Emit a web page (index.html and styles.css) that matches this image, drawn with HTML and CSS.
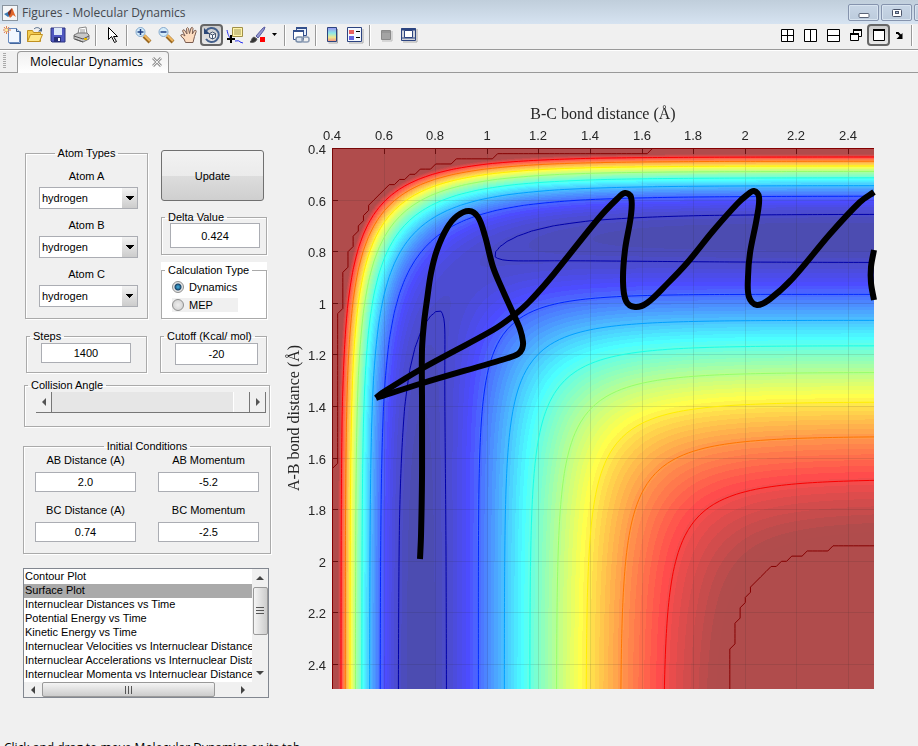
FILE: index.html
```html
<!DOCTYPE html>
<html lang="en">
<head>
<meta charset="UTF-8">
<meta name="viewport" content="width=device-width, initial-scale=1.0">
<title>Figures - Molecular Dynamics</title>
<link rel="stylesheet" href="styles.css">
</head>
<body>
<header class="titlebar">
    <svg class="app-icon" width="16" height="16" viewBox="0 0 16 16">
        <rect x="0.5" y="0.5" width="15" height="15" fill="#f4f6f8" stroke="#8a949e"/>
        <path d="M2 9l4-2 3 3-3 2z" fill="#3a78b0"/>
        <path d="M6 7l4-4 0 8-2 1-2-3z" fill="#7a2c20"/>
        <path d="M10 3c1 1 2 5 4 9l-3-2-3 3-1-2c2-1 2-5 3-8z" fill="#e0662c"/>
    </svg>
    <h1>Figures - Molecular Dynamics</h1>
    <div class="window-buttons">
        <button type="button" aria-label="Minimize"><svg width="12" height="12" viewBox="0 0 12 12"><rect x="1" y="6.500" width="10" height="4" rx="1" fill="#fff" stroke="#5a6478"/></svg></button>
        <button type="button" aria-label="Maximize"><svg width="12" height="12" viewBox="0 0 12 12"><rect x="1.500" y="2.500" width="9" height="7" rx="1" fill="#fff" stroke="#4a546a"/><rect x="4.500" y="4.500" width="3" height="2" fill="#a8bcd8" stroke="#4a546a"/></svg></button>
        <button type="button" aria-label="Close"></button>
    </div>
</header>

<nav class="toolbar">
    <button type="button" aria-label="New Figure"><svg width="18" height="18" viewBox="0 0 18 18"><path d="M5.500 2.500h8l3 3v11h-11z" fill="#f2f7ff" stroke="#6a8cc0"/><path d="M13.500 2.500v3h3" fill="#c8daf4" stroke="#34588c"/><path d="M17.500 5.500v12h-11" fill="none" stroke="#44669c"/><path d="M3.500 0v8M0 4h8M1 1l5 6M6 1L1 7" stroke="#e08050"/><circle cx="3.500" cy="4" r="1.500" fill="#fff2a0"/></svg></button>
    <button type="button" aria-label="Open File"><svg width="18" height="18" viewBox="0 0 18 18"><path d="M1.500 15.500v-11h5l1 2h7v9z" fill="#f4cc50" stroke="#c09020"/><path d="M1.500 15.500l3-7h12l-3 7z" fill="#ffe88a" stroke="#c09020"/><path d="M8 3c2-2 5-2 7 1" fill="none" stroke="#4a6484"/><path d="M16 1.500v4h-4z" fill="#4a6484"/></svg></button>
    <button type="button" aria-label="Save Figure"><svg width="18" height="18" viewBox="0 0 18 18"><path d="M2 2h14v14H3l-1-1z" fill="#5058c0" stroke="#2c3480"/><path d="M5 2h8v7H5z" fill="#dce8f8"/><path d="M5 11h7v5H5z" fill="#283078"/><path d="M9 12h2v3H9z" fill="#fff"/></svg></button>
    <button type="button" aria-label="Print Figure"><svg width="18" height="18" viewBox="0 0 18 18"><path d="M6 8l1-6 7-1 1 7z" fill="#fff" stroke="#888"/><path d="M8 4h5M8 6h5" stroke="#999"/><path d="M2 9l4-2h9l2 2v4l-6 3-9-3z" fill="#c8c8c8" stroke="#777"/><path d="M2 10l9 3 6-3M3 13l8 3" stroke="#555" fill="none"/><path d="M12 13h3" stroke="#e8b800" stroke-width="2"/></svg></button>
    <span class="sep"></span>
    <button type="button" aria-label="Edit Plot"><svg width="18" height="18" viewBox="0 0 18 18"><path d="M5.500 1.500v12l3-3 3 6 2-1-3-5h4z" fill="#fff" stroke="#000"/></svg></button>
    <span class="sep"></span>
    <button type="button" aria-label="Zoom In"><svg width="18" height="18" viewBox="0 0 18 18"><path d="M10 10l6 6" stroke="#9a6820" stroke-width="4"/><path d="M10 9l6 6" stroke="#f0b860" stroke-width="2"/><circle cx="6.500" cy="6" r="4.500" fill="#d4ecfa" stroke="#84a8cc"/><path d="M6.500 3v6M3.500 6h6" stroke="#1c3c80" stroke-width="1.500"/></svg></button>
    <button type="button" aria-label="Zoom Out"><svg width="18" height="18" viewBox="0 0 18 18"><path d="M10 10l6 6" stroke="#9a6820" stroke-width="4"/><path d="M10 9l6 6" stroke="#f0b860" stroke-width="2"/><circle cx="6.500" cy="6" r="4.500" fill="#d4ecfa" stroke="#84a8cc"/><path d="M3.500 6h6" stroke="#1c3c80" stroke-width="1.500"/></svg></button>
    <button type="button" aria-label="Pan"><svg width="18" height="18" viewBox="0 0 18 18"><path d="M5.500 16.500L4 13 .8 10q0-2 2-1.500L5 10 2.600 5q.4-2 1.800-1L7 8 6.500 2.500q1-1.800 2 0L9.500 7.500 11 2q1.500-1.500 2 .5l-.7 5.500L14.500 4.500q1.800-.8 1.700 1l-1.700 5-1.500 6z" fill="#fcdcc0" stroke="#7a5c50"/></svg></button>
    <button type="button" class="pressed" aria-label="Rotate 3D"><svg width="18" height="18" viewBox="0 0 18 18"><path d="M3 5A7 7 0 1 1 3 13" fill="none" stroke="#44608c" stroke-width="2"/><path d="M1 2v6h6z" fill="#2c4878"/><path d="M6.500 7.500l3-1.500 3 1.500v4l-3 1.500-3-1.500zM6.500 7.500l3 1.500 3-1.500M9.500 9v4" fill="#f4f6fa" stroke="#44546c"/></svg></button>
    <button type="button" aria-label="Data Cursor"><svg width="18" height="18" viewBox="0 0 18 18"><path d="M6.500 1.500h10v9h-10z" fill="#fff4a8" stroke="#a09048"/><path d="M8 4h7M8 6h7M8 8h7" stroke="#a09860"/><path d="M1 4c1 5 2 7 4 9M9 15c3 0 4-1 5 1l3 1" fill="none" stroke="#2830f0"/><path d="M5 9v8M1 13h8" stroke="#000" stroke-width="2"/></svg></button>
    <button type="button" aria-label="Brush"><svg width="18" height="18" viewBox="0 0 18 18"><path d="M7 10l7-8 2-1-1 3-6 8z" fill="#9498d0" stroke="#585ca0"/><path d="M1 16c2-1 1-4 4-5l3 2c-1 3-4 4-7 3z" fill="#333" stroke="#555"/><path d="M11 11h5v5h-5z" fill="#f00"/></svg></button>
    <button type="button" class="caret" aria-label="Brush options"><svg width="6" height="4" viewBox="0 0 6 4"><path d="M0 0h5L2.500 3z" fill="#000"/></svg></button>
    <span class="sep"></span>
    <button type="button" aria-label="Link Plot"><svg width="18" height="18" viewBox="0 0 18 18"><path d="M4.500 2.500h10v7h-10z" fill="#e8f0fc" stroke="#34508c"/><path d="M1.500 5.500h10v8h-10z" fill="#fff" stroke="#34508c"/><path d="M4 2h11M1 5h11" stroke="#34508c" stroke-width="2"/><rect x="4" y="11" width="7" height="5" rx="2" fill="#dce4ee" stroke="#788ca8" stroke-width="1.500"/><rect x="10" y="11" width="7" height="5" rx="2" fill="none" stroke="#8c9cb4" stroke-width="1.500"/></svg></button>
    <span class="sep"></span>
    <button type="button" aria-label="Insert Colorbar"><svg width="18" height="18" viewBox="0 0 18 18"><defs><linearGradient id="bar" x2="0" y2="1"><stop offset="0" stop-color="#9a90f0"/><stop offset=".4" stop-color="#8ce8e8"/><stop offset=".7" stop-color="#f0e890"/><stop offset="1" stop-color="#f49080"/></linearGradient></defs><path d="M14.500 3v14h-9" stroke="#aaa" fill="none"/><path d="M4.500 1.500h9v14h-9z" fill="url(#bar)" stroke="#2c4480"/></svg></button>
    <button type="button" aria-label="Insert Legend"><svg width="18" height="18" viewBox="0 0 18 18"><path d="M17 3v14H3" stroke="#aaa" fill="none"/><path d="M1.500 1.500h14v14h-14z" fill="#f4f8ff" stroke="#2c4480"/><path d="M3 4h5v4H3z" fill="#e86060"/><path d="M3 10h5v4H3z" fill="#6464e0"/><path d="M10 5.500h4M10 11.500h4" stroke="#000"/></svg></button>
    <span class="sep"></span>
    <button type="button" aria-label="Hide Plot Tools"><svg width="18" height="18" viewBox="0 0 18 18"><path d="M15 5v10H5" stroke="#bbb" fill="none"/><path d="M4.500 4.500h9v9h-9z" fill="#a4a4a4" stroke="#8a8a8a"/><path d="M4 6h10" stroke="#8a8a8a"/></svg></button>
    <button type="button" aria-label="Show Plot Tools"><svg width="18" height="18" viewBox="0 0 18 18"><path d="M17 3v13H3" stroke="#aaa" fill="none"/><path d="M1.500 2.500h14v12h-14z" fill="#d0d4dc" stroke="#2c4480"/><path d="M1 3.500h15" stroke="#2c4480" stroke-width="2"/><path d="M4.500 4.500h8v7h-8z" fill="#fff" stroke="#2c4480"/><path d="M1 12h15" stroke="#2c4480"/></svg></button>
    <div class="layout-buttons">
        <button type="button" aria-label="Tile"><svg width="14" height="14" viewBox="0 0 14 14"><path d="M1.500 1.500h12v12h-12zM7.500 1v13M1 7.500h13" fill="#fff" stroke="#000"/></svg></button>
        <button type="button" aria-label="Left/Right Tile"><svg width="14" height="14" viewBox="0 0 14 14"><path d="M1.500 1.500h12v12h-12zM7.500 1v13" fill="#fff" stroke="#000"/></svg></button>
        <button type="button" aria-label="Top/Bottom Tile"><svg width="14" height="14" viewBox="0 0 14 14"><path d="M1.500 1.500h12v12h-12zM1 7.500h13" fill="#fff" stroke="#000"/></svg></button>
        <button type="button" aria-label="Float"><svg width="14" height="14" viewBox="0 0 14 14"><path d="M4.500 1.500h8v7h-8z" fill="#fff" stroke="#000"/><path d="M4 2h9" stroke="#000" stroke-width="2"/><path d="M1.500 5.500h8v7h-8z" fill="#fff" stroke="#000"/><path d="M1 6h9" stroke="#000" stroke-width="2"/></svg></button>
        <button type="button" class="pressed" aria-label="Maximize"><svg width="14" height="14" viewBox="0 0 14 14"><path d="M1.500 1.500h11v11h-11z" fill="#fff" stroke="#000"/><path d="M1 2h12" stroke="#000" stroke-width="2"/></svg></button>
        <button type="button" class="dock" aria-label="Dock"><svg width="10" height="10" viewBox="0 0 10 10"><path d="M2 3h2l3 3" fill="none" stroke="#000" stroke-width="2"/><path d="M8.500 3v6h-6z" fill="#000"/></svg></button>
        <span class="sep"></span>
    </div>
</nav>

<div class="tabs">
    <span class="grip"></span>
    <div class="tab">
        <a href="#">Molecular Dynamics</a>
        <button type="button" aria-label="Close tab"><svg width="10" height="10" viewBox="0 0 10 10"><path d="M1 1l8 8M9 1L1 9" stroke="#999" stroke-width="3"/><path d="M1 1l8 8M9 1L1 9" stroke="#eee" stroke-width="1"/></svg></button>
    </div>
</div>

<main>
    <form class="controls">
        <div class="row">
            <fieldset class="atoms centered">
                <legend>Atom Types</legend>
                <label for="atomA">Atom A</label>
                <select id="atomA"><option>hydrogen</option></select>
                <label for="atomB">Atom B</label>
                <select id="atomB"><option>hydrogen</option></select>
                <label for="atomC">Atom C</label>
                <select id="atomC"><option>hydrogen</option></select>
            </fieldset>
            <div class="side">
                <button type="button" class="update">Update</button>
                <fieldset class="delta">
                    <legend><label for="delta">Delta Value</label></legend>
                    <input type="text" id="delta" value="0.424">
                </fieldset>
                <div class="calc">
                    <fieldset>
                        <legend>Calculation Type</legend>
                        <label><input type="radio" name="calc" checked>Dynamics</label>
                        <label class="mep"><input type="radio" name="calc">MEP</label>
                    </fieldset>
                </div>
            </div>
        </div>
        <div class="row">
            <fieldset class="steps">
                <legend><label for="steps">Steps</label></legend>
                <input type="text" id="steps" value="1400">
            </fieldset>
            <fieldset class="cutoff">
                <legend><label for="cutoff">Cutoff (Kcal/ mol)</label></legend>
                <input type="text" id="cutoff" value="-20">
            </fieldset>
        </div>
        <fieldset class="angle">
            <legend><label for="angle">Collision Angle</label></legend>
            <div class="slider">
                <button type="button" aria-label="Decrease"><svg width="4" height="8" viewBox="0 0 4 8"><path d="M4 0v8L0 4z" fill="#555"/></svg></button>
                <input type="range" id="angle" min="0" max="180" value="180">
                <button type="button" aria-label="Increase"><svg width="4" height="8" viewBox="0 0 4 8"><path d="M0 0v8l4-4z" fill="#555"/></svg></button>
            </div>
        </fieldset>
        <fieldset class="initial centered">
            <legend>Initial Conditions</legend>
            <div class="initial-grid">
                <div><label for="abDist">AB Distance (A)</label><input type="text" id="abDist" value="2.0"></div>
                <div><label for="abMom">AB Momentum</label><input type="text" id="abMom" value="-5.2"></div>
                <div><label for="bcDist">BC Distance (A)</label><input type="text" id="bcDist" value="0.74"></div>
                <div><label for="bcMom">BC Momentum</label><input type="text" id="bcMom" value="-2.5"></div>
            </div>
        </fieldset>
        <div class="plots">
            <select size="8" aria-label="Plot type">
                <option>Contour Plot</option>
                <option selected>Surface Plot</option>
                <option>Internuclear Distances vs Time</option>
                <option>Potential Energy vs Time</option>
                <option>Kinetic Energy vs Time</option>
                <option>Internuclear Velocities vs Internuclear Distance</option>
                <option>Internuclear Accelerations vs Internuclear Distance</option>
                <option>Internuclear Momenta vs Internuclear Distance</option>
            </select>
            <div class="vbar">
                <svg width="8" height="4" viewBox="0 0 8 4"><path d="M0 4h8L4 0z" fill="#444"/></svg>
                <span class="thumb"><svg width="8" height="8" viewBox="0 0 8 8"><path d="M0 .5h8M0 3.500h8M0 6.500h8" stroke="#555"/></svg></span>
                <svg width="8" height="4" viewBox="0 0 8 4"><path d="M0 0h8L4 4z" fill="#444"/></svg>
            </div>
            <div class="hbar">
                <svg width="4" height="8" viewBox="0 0 4 8"><path d="M4 0v8L0 4z" fill="#444"/></svg>
                <span class="thumb"><svg width="8" height="8" viewBox="0 0 8 8"><path d="M.5 0v8M3.500 0v8M6.500 0v8" stroke="#555"/></svg></span>
                <svg width="4" height="8" viewBox="0 0 4 8"><path d="M0 0v8l4-4z" fill="#444"/></svg>
            </div>
        </div>
    </form>

    <div class="chart">
        <canvas id="surface" width="542" height="541"></canvas>
        <svg id="axes" width="620" height="600" viewBox="-52 -55 620 600">
            <text class="axis-label" x="271" y="-29">B-C bond distance (Å)</text>
            <text class="axis-label" transform="translate(-33 270) rotate(-90)">A-B bond distance (Å)</text>
            <g id="ticks"></g>
            <g id="trajectory"></g>
        </svg>
    </div>
</main>

<footer>Click and drag to move Molecular Dynamics or its tab</footer>

<script src="script.js"></script>
</body>
</html>
```
FILE: styles.css
```css
* {
    box-sizing: border-box;
}
body {
    margin: 0;
    height: 100vh;
    overflow: hidden;
    display: flex;
    flex-direction: column;
    background-color: #f0f0f0;
    font-family: "Liberation Sans", Arial, sans-serif;
    font-size: 11px;
    line-height: 14px;
    color: #000;
}
button, input, select {
    font: inherit;
    color: inherit;
    margin: 0;
    padding: 0;
}
svg {
    display: block;
    flex: none;
}

/* title bar */
.titlebar {
    flex: none;
    display: flex;
    align-items: center;
    height: 24px;
    padding: 1px 0 0 2px;
    background: linear-gradient(#c0cedb, #d6e3f1);
}
.titlebar h1 {
    margin: 0 0 0 4px;
    font-family: "Open Sans", "Segoe UI", sans-serif;
    font-size: 12px;
    line-height: 22px;
    font-weight: normal;
    color: #44484e;
}
.window-buttons {
    display: flex;
    gap: 2px;
    margin-left: auto;
    margin-right: -27px;
}
.window-buttons button {
    display: flex;
    align-items: center;
    justify-content: center;
    width: 31px;
    height: 17px;
    border: 1px solid #8593ad;
    border-radius: 2px;
    background: linear-gradient(#c8d6e6, #bccbdc);
    box-shadow: inset 0 0 0 1px #d8e4f0;
}

/* toolbar */
.toolbar {
    flex: none;
    display: flex;
    align-items: center;
    height: 26px;
    padding-bottom: 3px;
    border-bottom: 1px solid #999;
}
.toolbar button {
    display: flex;
    align-items: center;
    justify-content: center;
    width: 23px;
    height: 22px;
    border: none;
    background: none;
}
.toolbar .pressed {
    border: 2px solid #666;
    border-radius: 4px;
    background: linear-gradient(#ccc, #e8e8e8);
}
.toolbar .caret {
    width: 12px;
}
.toolbar .dock {
    width: 18px;
}
.sep {
    width: 2px;
    height: 21px;
    margin: 0 3px;
    border-left: 1px solid #999;
    border-right: 1px solid #fff;
}
.layout-buttons {
    display: flex;
    align-items: center;
    margin-left: auto;
    margin-right: 2px;
}

/* document tabs */
.tabs {
    flex: none;
    display: flex;
    align-items: flex-end;
    height: 23px;
    border-top: 1px solid #fff;
    border-bottom: 1px solid #999;
}
.grip {
    width: 3px;
    height: 16px;
    margin: 0 11px 3px 3px;
    background: repeating-linear-gradient(#aaa 0 1px, #f0f0f0 1px 2px);
}
.tab {
    display: flex;
    align-items: center;
    gap: 9px;
    height: 22px;
    margin-bottom: -1px;
    padding: 0 6px 1px 12px;
    border: 1px solid #999;
    border-bottom: none;
    border-radius: 4px 4px 0 0;
    background: linear-gradient(#f0f0f0, #fff);
}
.tab a {
    font-family: "Open Sans", "Segoe UI", sans-serif;
    font-size: 12px;
    color: #000;
    text-decoration: none;
}
.tab button {
    border: none;
    background: none;
}

main {
    flex: none;
    display: flex;
    align-items: flex-start;
}

/* left side */
.controls {
    flex: none;
    display: flex;
    flex-direction: column;
    width: 248px;
    margin: 73px 0 0 23px;
}
.row {
    display: flex;
    justify-content: space-between;
    margin: 0 4px 10px 2px;
}
fieldset {
    min-width: 0;
    margin: 0;
    padding: 0;
    border: 1px solid #aaa;
    box-shadow: 1px 1px #fff, inset 1px 1px #fff;
}
legend {
    margin-left: 3px;
    padding: 0 3px;
}
.centered legend {
    margin: 0 auto;
}
input[type="text"] {
    display: block;
    height: 20px;
    border: 1px solid #abadb3;
    background-color: #fff;
    text-align: center;
}
.atoms {
    width: 123px;
    height: 173px;
    text-align: center;
}
.atoms label {
    display: block;
    margin-top: 9px;
}
.atoms select {
    appearance: none;
    width: 99px;
    height: 22px;
    margin: 4px 0 0 4px;
    padding-left: 2px;
    border: 1px solid #abadb3;
    border-radius: 0;
    background:
        linear-gradient(to top right, transparent 50%, #000 50%) right 7px center / 4px 4px no-repeat,
        linear-gradient(to top left, transparent 50%, #000 50%) right 3px center / 4px 4px no-repeat,
        linear-gradient(#f2f2f2, #ccc) right / 15px 100% no-repeat,
        #fff;
}
.side {
    display: flex;
    flex-direction: column;
    width: 106px;
    padding-top: 4px;
}
.update {
    width: 103px;
    height: 51px;
    border: 1px solid #707070;
    border-radius: 3px;
    background: linear-gradient(#f2f2f2, #ebebeb 50%, #ddd 50%, #cfcfcf);
}
.delta {
    height: 45px;
    margin-top: 9px;
}
.delta input {
    width: 90px;
    height: 25px;
    margin: -1px 0 0 8px;
}
.calc {
    margin-top: 7px;
    padding-top: 1px;
    background-color: #fff;
}
.calc fieldset {
    height: 56px;
}
.calc label {
    display: flex;
    align-items: center;
    gap: 5px;
    width: 66px;
    height: 14px;
    margin: 3px 0 4px 10px;
}
.calc .mep {
    background-color: #f0f0f0;
}
input[type="radio"] {
    appearance: none;
    width: 12px;
    height: 12px;
    border: 1px solid #8e8f8f;
    border-radius: 50%;
    background: radial-gradient(#eee, #ccc);
}
input[type="radio"]:checked {
    background: radial-gradient(circle, #3a9ac8 0 1px, #1a4468 3px, #e4e4e4 4px);
}
.steps, .cutoff {
    height: 44px;
}
.steps {
    width: 121px;
    margin-left: 1px;
}
.cutoff {
    width: 107px;
}
.steps input {
    width: 90px;
    margin-left: 14px;
}
.cutoff input {
    width: 83px;
    height: 22px;
    margin-left: 14px;
}
.angle {
    height: 49px;
    margin: -5px 1px 12px;
}
.slider {
    display: flex;
    height: 21px;
    margin: 0 3px 0 11px;
    border-bottom: 1px solid #777;
    background-color: #e6e6e6;
}
.slider button {
    display: flex;
    align-items: center;
    justify-content: center;
    width: 16px;
    border: none;
    border-right: 1px solid #777;
    background-color: #f0f0f0;
}
.slider input {
    appearance: none;
    flex: 1;
    min-width: 0;
    background: none;
}
.slider input::-webkit-slider-thumb {
    appearance: none;
    width: 17px;
    height: 20px;
    border-left: 1px solid #fff;
    border-right: 1px solid #777;
    background-color: #f0f0f0;
}
.initial {
    height: 115px;
}
.initial-grid {
    display: grid;
    grid-template-columns: 101px 101px;
    justify-content: space-between;
    padding: 0 11px;
    text-align: center;
}
.initial-grid label {
    display: block;
}
.initial-grid input {
    width: 101px;
    margin: 5px 0 11px;
}
.plots {
    display: grid;
    grid-template-columns: 1fr 16px;
    grid-template-rows: 113px 15px;
    margin: 14px 2px 0 0;
    border: 1px solid #828790;
    background-color: #f0f0f0;
}
.plots select {
    appearance: none;
    min-width: 0;
    height: 113px;
    padding-top: 1px;
    overflow: hidden;
    border: none;
    border-radius: 0;
    outline: none;
    background-color: #fff;
}
.plots option {
    height: 14px;
    min-height: 14px;
    padding: 0 1px;
    line-height: 14px;
    color: #000;
}
.plots option:checked {
    color: #000;
    background: #aaa linear-gradient(#aaa, #aaa);
}
.vbar, .hbar {
    display: flex;
    align-items: center;
    justify-content: space-between;
}
.vbar {
    flex-direction: column;
    padding: 7px 0;
}
.hbar {
    padding: 0 7px;
}
.thumb {
    display: flex;
    align-items: center;
    justify-content: center;
    border: 1px solid #999;
    border-radius: 2px;
}
.vbar .thumb {
    width: 15px;
    height: 48px;
    margin: 7px 0 auto;
    background: linear-gradient(to right, #f4f4f4, #ccc);
}
.hbar .thumb {
    width: 173px;
    height: 15px;
    margin: 0 auto 0 7px;
    background: linear-gradient(#f4f4f4, #ccc);
}

/* potential surface */
.chart {
    flex: none;
    display: grid;
    margin: 20px 0 0 9px;
}
.chart canvas, .chart svg {
    grid-area: 1 / 1;
}
.chart canvas {
    margin: 55px 0 0 52px;
}
.axis-label {
    font-family: "Liberation Serif", serif;
    font-size: 16px;
    text-anchor: middle;
    fill: #262626;
}
.tick {
    font-size: 13px;
    text-anchor: middle;
    fill: #262626;
}
.tick-y {
    text-anchor: end;
}
#trajectory path {
    fill: none;
    stroke: #000;
    stroke-width: 6px;
    stroke-linejoin: round;
}
footer {
    padding: 43px 0 0 4px;
    font-family: "Open Sans", "Segoe UI", sans-serif;
    font-size: 12px;
    line-height: 14px;
    white-space: nowrap;
}
```
FILE: script.js
```javascript
// LEPS potential of collinear H + H2, kcal/mol and angstrom
var D = 109.4, BETA = 2.0, R0 = 0.7395, SATO = 0.185;
var CUTOFF = -20, VMIN = -109.4;
var SCALE = 258, STEP = 0.02, N = 105;

function parts(r) {
    var y = Math.exp(-BETA * (r - R0));
    var k = D / (4 * (1 + SATO));
    return [
        k * ((3 + SATO) * y * y - (2 + 6 * SATO) * y),
        k * ((1 + 3 * SATO) * y * y - (6 + 2 * SATO) * y)
    ];
}

function potential(bc, ab) {
    var a = parts(ab), b = parts(bc), c = parts(ab + bc);
    var s = Math.pow(a[1] - b[1], 2) + Math.pow(b[1] - c[1], 2) + Math.pow(a[1] - c[1], 2);
    return Math.min(CUTOFF, a[0] + b[0] + c[0] - Math.sqrt(s / 2));
}

function jet(f) {
    function channel(x) {
        return Math.max(0, Math.min(1, 1.5 - Math.abs(4 * f - x)));
    }
    return [channel(3), channel(2), channel(1)];
}

var canvas = document.getElementById("surface");
var ctx = canvas.getContext("2d");

function drawSurface() {
    var w = canvas.width, h = canvas.height;
    var img = ctx.createImageData(w, h);
    for (var j = 0; j < h; j++) {
        for (var i = 0; i < w; i++) {
            var v = potential(0.4 + i / SCALE, 0.4 + j / SCALE);
            var f = (v - VMIN) / (CUTOFF - VMIN);
            var idx = Math.max(0, Math.min(63, Math.floor(f * 64)));
            var c = jet(Math.min(0.985, (idx + 1) / 64));
            var p = (j * w + i) * 4;
            for (var k = 0; k < 3; k++) {
                img.data[p + k] = 76 + 179 * c[k];
            }
            img.data[p + 3] = 255;
        }
    }
    ctx.putImageData(img, 0, 0);
}

function drawGrid() {
    for (var t = 0; t <= 10; t++) {
        var p = Math.round(t * 0.2 * SCALE);
        ctx.fillStyle = "rgba(38, 38, 38, 0.12)";
        ctx.fillRect(p, 0, 1, canvas.height);
        ctx.fillRect(0, p, canvas.width, 1);
        ctx.fillStyle = "#6a1010";
        ctx.fillRect(p, 0, 1, 6);
        ctx.fillRect(0, p, 6, 1);
    }
    ctx.fillStyle = "#780808";
    ctx.fillRect(0, 0, canvas.width, 1);
    ctx.fillRect(0, 0, 1, canvas.height);
}

function drawContours() {
    var z = [], i, j;
    for (j = 0; j <= N; j++) {
        z.push([]);
        for (i = 0; i <= N; i++) {
            z[j].push(potential(0.4 + i * STEP, 0.4 + j * STEP));
        }
    }
    for (var n = 0; n < 9; n++) {
        var level = CUTOFF - 10.7 * n;
        var c = jet(Math.min(0.995, (level - VMIN) / (CUTOFF - VMIN)));
        ctx.strokeStyle = "rgb(" + c.map(function (x) { return Math.round(x * 255); }).join(",") + ")";
        ctx.lineWidth = 1;
        ctx.beginPath();
        for (j = 0; j < N; j++) {
            for (i = 0; i < N; i++) {
                var q = [[i, j], [i + 1, j], [i + 1, j + 1], [i, j + 1]];
                var hits = [];
                for (var e = 0; e < 4; e++) {
                    var a = q[e], b = q[(e + 1) % 4];
                    var va = z[a[1]][a[0]], vb = z[b[1]][b[0]];
                    if ((va >= level) !== (vb >= level)) {
                        var t = (level - va) / (vb - va);
                        hits.push([a[0] + t * (b[0] - a[0]), a[1] + t * (b[1] - a[1])]);
                    }
                }
                for (var s = 0; s + 1 < hits.length; s += 2) {
                    ctx.moveTo(hits[s][0] * STEP * SCALE + 0.5, hits[s][1] * STEP * SCALE + 0.5);
                    ctx.lineTo(hits[s + 1][0] * STEP * SCALE + 0.5, hits[s + 1][1] * STEP * SCALE + 0.5);
                }
            }
        }
        ctx.stroke();
    }
}

function svg(name, attrs, text) {
    var el = document.createElementNS("http://www.w3.org/2000/svg", name);
    for (var key in attrs) {
        el.setAttribute(key, attrs[key]);
    }
    if (text) {
        el.textContent = text;
    }
    return el;
}

function drawTicks() {
    var g = document.getElementById("ticks");
    for (var t = 0; t <= 10; t++) {
        var label = String(Math.round((0.4 + t * 0.2) * 10) / 10);
        var p = Math.round(t * 0.2 * SCALE);
        g.appendChild(svg("text", { "class": "tick", x: p, y: -8 }, label));
        g.appendChild(svg("text", { "class": "tick tick-y", x: -6, y: p + 6 }, label));
    }
}

// trajectory samples inside the plot, split where the direction reverses
var paths = [
    [[88, 411], [89, 388], [90, 330], [90, 252], [90, 202], [92, 175], [95, 152], [99, 125],
     [105, 102], [115, 80], [125, 68], [137, 63], [146, 69], [153, 88], [161, 119], [171, 143],
     [181, 165], [188, 181], [191, 194], [190, 201], [186, 206], [176, 210], [91, 235], [44, 250]],
    [[44, 250], [50, 245], [91, 220], [161, 182], [181, 168], [197, 154], [221, 127], [266, 71],
     [285, 51], [293, 45], [299, 49], [299, 67], [293, 102], [291, 133], [294, 153], [303, 159],
     [315, 155], [335, 136], [355, 115], [381, 83], [405, 56], [415, 47], [422, 43], [427, 49],
     [425, 69], [418, 105], [416, 129], [417, 149], [425, 157], [438, 151], [461, 130],
     [498, 86], [528, 54], [542, 44]],
    [[542, 102], [539, 119], [539, 135], [542, 152]]
];

function drawTrajectory() {
    var g = document.getElementById("trajectory");
    paths.forEach(function (pts) {
        var d = "M" + pts[0];
        for (var i = 0; i < pts.length - 1; i++) {
            var p0 = pts[i - 1] || pts[i], p1 = pts[i], p2 = pts[i + 1], p3 = pts[i + 2] || p2;
            // keep the handles shorter than the segment they belong to
            var len = Math.hypot(p2[0] - p1[0], p2[1] - p1[1]) / 3;
            var t1 = Math.hypot(p2[0] - p0[0], p2[1] - p0[1]);
            var t2 = Math.hypot(p3[0] - p1[0], p3[1] - p1[1]);
            d += "C" + [
                p1[0] + (p2[0] - p0[0]) / t1 * len, p1[1] + (p2[1] - p0[1]) / t1 * len,
                p2[0] - (p3[0] - p1[0]) / t2 * len, p2[1] - (p3[1] - p1[1]) / t2 * len,
                p2[0], p2[1]
            ].join(" ");
        }
        g.appendChild(svg("path", { d: d }));
    });
}

drawSurface();
drawGrid();
drawContours();
drawTicks();
drawTrajectory();
```
